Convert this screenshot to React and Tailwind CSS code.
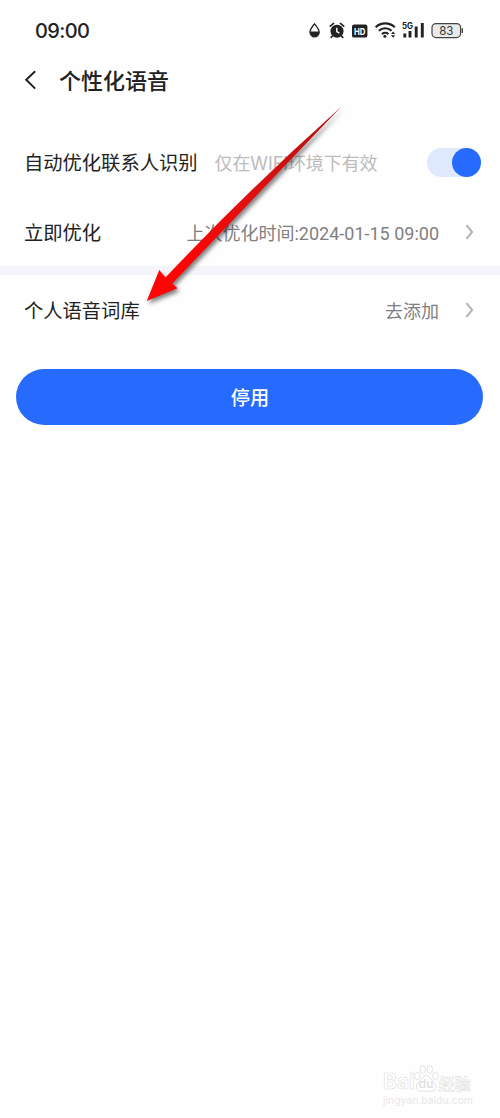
import React from 'react'

function StatusIcons() {
    return (
        <svg width="158" height="24" viewBox="306 18 158 24" fill="none">
            {/* Drop */}
            <path d="M314.5 23.8C312.6 26.3 310 29.2 310 32.2a4.6 4.6 0 0 0 9.2 0c0-3-2.8-5.9-4.7-8.4Z" stroke="#222" strokeWidth="1.3" />
            <path d="M310 31.5h9.2a4.6 5.3 0 0 1-9.2 0Z" fill="#222" />

            {/* Alarm */}
            <circle cx="337" cy="31.2" r="6.5" fill="#222" />
            <path d="M330.3 26.2l3.3-2.8M343.7 26.2l-3.3-2.8M332.5 36l-1.3 1.4M341.5 36l1.3 1.4" stroke="#222" strokeWidth="1.6" strokeLinecap="round" />
            <path d="M336.8 27.8v3.8l2.6 1.5" stroke="#fff" strokeWidth="1.4" />

            {/* HD */}
            <rect x="352" y="24.4" width="15.4" height="13.2" rx="2.2" fill="#222" />
            <text x="359.7" y="34.6" fill="#fff" fontSize="9.5" fontWeight="700" textAnchor="middle" textLength="11.5" lengthAdjust="spacingAndGlyphs">HD</text>

            {/* Wifi */}
            <path d="M375.6 27.2c5.4-5.1 13.8-5.1 19.2 0M378.8 30.8c3.6-3.4 9.2-3.4 12.8 0M382 34.1c1.8-1.6 4.6-1.6 6.4 0" stroke="#222" strokeWidth="2.1" />
            <circle cx="384.9" cy="36.2" r="1.5" fill="#222" />
            <path d="M391 34.1l2.1-2.5 2.1 2.5ZM391 35.3l2.1 2.5 2.1-2.5Z" fill="#222" />

            {/* Signal */}
            <text x="402" y="29.2" fill="#222" fontSize="8.5" fontWeight="700" textLength="11" lengthAdjust="spacingAndGlyphs">5G</text>
            <path d="M404.8 33.5v4M410 31v6.5M416.2 26.6v10.9M422.3 23v14.5" stroke="#222" strokeWidth="2.9" />

            {/* Battery */}
            <rect x="432" y="23.6" width="28.6" height="14" rx="4" fill="#e9e9e9" stroke="#444" strokeWidth="1.2" />
            <path d="M462.3 28.2v4.8" stroke="#444" strokeWidth="1.4" />
            <text x="446.3" y="34.6" fill="#333" fontSize="11.5" textAnchor="middle">83</text>
        </svg>
    )
}

function Chevron() {
    return (
        <svg width="10" height="18" viewBox="0 0 10 18" fill="none" className="ml-[26px] shrink-0">
            <path d="M1.5 2.2l5.6 6.8-5.6 6.8" stroke="#b3b3b3" strokeWidth="2" />
        </svg>
    )
}

function Row({ label, value }) {
    return (
        <div className="flex h-[70px] items-center pl-[24px] pr-[25px]">
            <span className="pt-[2px] text-[19.3px] text-[#222]">{label}</span>
            <span className="ml-auto pt-[2px] font-['Roboto','Noto_Sans_CJK_SC',sans-serif] text-[18px] text-[#808080]">{value}</span>
            <Chevron />
        </div>
    )
}

function Watermark() {
    return (
        <div className="absolute left-[383px] top-[1063px] w-[92px] text-[#e8e8e8]">
            <div className="flex h-[32px] items-end leading-none">
                <span className="text-[21px] font-bold leading-[26px] text-white [-webkit-text-stroke:0.6px_#dedede]">Bai</span>
                <span className="relative -ml-px h-[32px] w-[25px]">
                    <svg width="25" height="32" viewBox="0 0 25 32" fill="#fff" stroke="#dedede" strokeWidth="0.9">
                        <ellipse cx="3.3" cy="13" rx="2.7" ry="3.7" />
                        <ellipse cx="8.7" cy="6.5" rx="2.7" ry="4" />
                        <ellipse cx="15.8" cy="6.5" rx="2.7" ry="4" />
                        <ellipse cx="21.5" cy="13" rx="2.7" ry="3.7" />
                        <path d="M12.3 12.5c-3 0-4.2 3.4-6.3 5.5-3 2.8-4.2 5-3.2 7.6 1.4 3.8 5.9 2.4 9.5 2.4s8.1 1.4 9.5-2.4c1-2.6-.2-4.8-3.2-7.6-2.1-2.1-3.3-5.5-6.3-5.5Z" />
                    </svg>
                    <span className="absolute left-[5px] top-[15px] text-[12px] font-medium text-[#dedede]">du</span>
                </span>
                <span className="pb-[3px] text-[16px] font-bold text-white [-webkit-text-stroke:0.6px_#dedede]">经验</span>
            </div>
            <p className="text-[10.4px] leading-[11px]">jingyan.baidu.com</p>
        </div>
    )
}

export default function App() {
    return (
        <div className="relative h-[1118px] w-[500px] overflow-hidden bg-[#fefefe] font-['Inter','Noto_Sans_CJK_SC',sans-serif]">
            {/* Status bar */}
            <div className="flex h-[60px] items-center justify-between pl-[35px] pr-[36px]">
                <span className="pt-[2px] text-[20px] font-medium tracking-[-0.6px] text-[#222]">09:00</span>
                <StatusIcons />
            </div>

            {/* Header */}
            <div className="flex h-10 items-center pl-[24px]">
                <svg width="14" height="22" viewBox="0 0 14 22" fill="none">
                    <path d="M11.2 2.2L2.2 10.8l9 8.8" stroke="#222" strokeWidth="2" />
                </svg>
                <h1 className="ml-[21px] pt-[2px] text-[22px] font-medium text-[#222]">个性化语音</h1>
            </div>

            {/* Settings */}
            <div className="mt-[27px] flex h-[70px] items-center pl-[24px] pr-[19px]">
                <span className="pt-[2px] text-[19.3px] text-[#222]">自动优化联系人识别</span>
                <span className="ml-[17px] pt-[2px] text-[18px] tracking-[-0.1px] text-[#bcbcbc]">仅在WIFI环境下有效</span>
                <span className="ml-auto flex h-[29px] w-[54px] justify-end rounded-full bg-[#dfe9fe]">
                    <span className="h-[29px] w-[29px] rounded-full bg-[#276bfe]" />
                </span>
            </div>
            <Row label="立即优化" value="上次优化时间:2024-01-15 09:00" />
            <div className="-mt-px h-[9px] bg-[#f4f4fa]" />
            <Row label="个人语音词库" value="去添加" />

            <button className="ml-[16.4px] mt-[24px] flex h-[56px] w-[467px] items-center justify-center rounded-full bg-[#276bfe] pt-[2px] text-[19.2px] font-medium text-white">
                停用
            </button>

            {/* Pointer arrow */}
            <svg width="500" height="340" viewBox="0 0 500 340" className="absolute left-0 top-0 drop-shadow-[2px_3px_2px_rgba(0,0,0,0.5)]">
                <defs>
                    <linearGradient id="arrow" x1="341" y1="107" x2="147" y2="301" gradientUnits="userSpaceOnUse">
                        <stop offset="0" stopColor="#b01010" />
                        <stop offset="0.45" stopColor="#e01010" />
                        <stop offset="0.75" stopColor="#fb0505" />
                    </linearGradient>
                </defs>
                <path d="M341 107Q248 190 165.5 277.5L159.3 270 146.7 301l30.8-12.8-5.2-4.7Z" fill="url(#arrow)" />
            </svg>

            <Watermark />
        </div>
    )
}
